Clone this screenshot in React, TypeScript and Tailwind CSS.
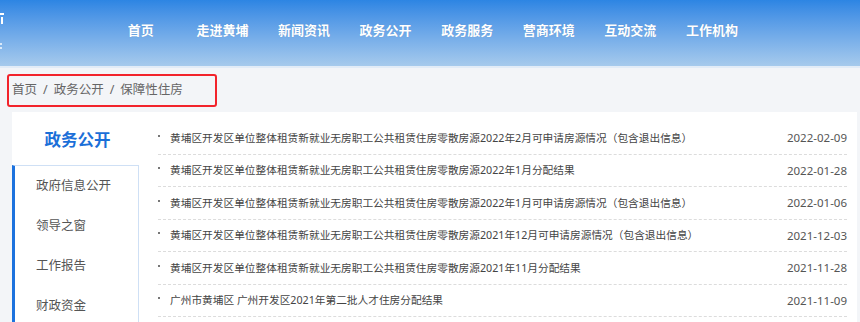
import React from "react";

const navItems = ["首页", "走进黄埔", "新闻资讯", "政务公开", "政务服务", "营商环境", "互动交流", "工作机构"];

const sideItems = ["政府信息公开", "领导之窗", "工作报告", "财政资金"];

const news = [
  { title: "黄埔区开发区单位整体租赁新就业无房职工公共租赁住房零散房源2022年2月可申请房源情况（包含退出信息）", date: "2022-02-09" },
  { title: "黄埔区开发区单位整体租赁新就业无房职工公共租赁住房零散房源2022年1月分配结果", date: "2022-01-28" },
  { title: "黄埔区开发区单位整体租赁新就业无房职工公共租赁住房零散房源2022年1月可申请房源情况（包含退出信息）", date: "2022-01-06" },
  { title: "黄埔区开发区单位整体租赁新就业无房职工公共租赁住房零散房源2021年12月可申请房源情况（包含退出信息）", date: "2021-12-03" },
  { title: "黄埔区开发区单位整体租赁新就业无房职工公共租赁住房零散房源2021年11月分配结果", date: "2021-11-28" },
  { title: "广州市黄埔区 广州开发区2021年第二批人才住房分配结果", date: "2021-11-09" },
];

export default function App() {
  return (
    <div
      className="w-[860px] h-[322px] overflow-hidden bg-[#f3f5f8]"
      style={{ fontFamily: '"Noto Sans", "Noto Sans CJK SC", sans-serif' }}
    >
      {/* Header */}
      <header className="h-[68px] bg-gradient-to-b from-[#2c85e3] to-[#a6caec] border-b-2 border-[#e2ecf7] flex">
        {/* logo mark, mostly off the left edge */}
        <div className="w-[4px] flex flex-col pt-[13px] gap-[2px]">
          <div className="w-[4px] h-[2px] bg-white" />
          <div className="w-[2px] h-[7px] bg-white ml-[1px]" />
          <div className="w-[2px] h-[2px] bg-white/70 mt-[17px]" />
          <div className="w-[2px] h-[2px] bg-white/70" />
        </div>
        <nav className="ml-[96px] flex h-[60px] items-center">
          {navItems.map((item) => (
            <div
              key={item}
              className="w-[81.6px] text-center text-white text-[13px] font-bold leading-[18px]"
              style={{ textShadow: "0 0 1px rgba(0,0,0,0.15)" }}
            >
              {item}
            </div>
          ))}
        </nav>
      </header>

      {/* Breadcrumb */}
      <div className="pt-[6px] pl-[7px]">
        <div className="w-[210px] h-[33px] border-2 border-[#f2232b] rounded-[3px] flex items-center pl-[3px] text-[12.5px] text-[#666] leading-none whitespace-nowrap">
          <span>首页</span>
          <span className="mx-[6px]">/</span>
          <span>政务公开</span>
          <span className="mx-[6px]">/</span>
          <span>保障性住房</span>
        </div>
      </div>

      {/* Main panel */}
      <div className="mt-[5px] ml-[12px] w-[845px] h-[220px] bg-white flex">
        <aside className="w-[127px] shrink-0">
          <div className="h-[53px] flex items-center justify-center pl-[4px] pt-[3px] text-[16.5px] font-bold text-[#1b6fd8]">
            政务公开
          </div>
          <div className="border border-[#cfe0f5] border-l-[3px] border-l-[#1c72de]">
            {sideItems.map((item) => (
              <div key={item} className="h-[40px] flex items-center pl-[21px] text-[12.5px] text-[#555]">
                {item}
              </div>
            ))}
          </div>
        </aside>

        <ul className="flex-1 pl-[19px] pr-[10px] pt-[10px]">
          {news.map((n) => (
            <li
              key={n.date}
              className="h-[32.5px] flex items-center border-b border-dashed border-[#dcdcdc] text-[10.7px] text-[#444] whitespace-nowrap"
            >
              <span className="w-[2px] h-[2px] bg-[#777] mr-[10px] -translate-y-[2px] shrink-0" />
              <span className="flex-1">{n.title}</span>
              <span className="text-[11.5px] text-[#555]">{n.date}</span>
            </li>
          ))}
        </ul>
      </div>
    </div>
  );
}
